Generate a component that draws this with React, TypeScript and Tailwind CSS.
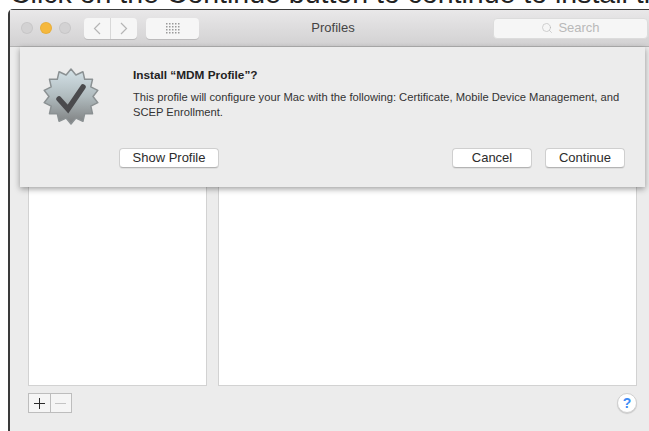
import { Search } from "lucide-react";

const sans = "font-['Liberation_Sans','Noto_Sans',sans-serif]";

// 14-pointed badge outline centred on 28,28
const sealPoints = Array.from({ length: 28 }, (_, i) => {
  const r = i % 2 === 0 ? 27.5 : 22;
  const a = (i * Math.PI) / 14 - Math.PI / 2;
  return `${(28 + r * Math.cos(a)).toFixed(2)},${(28.5 + r * Math.sin(a)).toFixed(2)}`;
}).join(" ");

function Seal() {
  return (
    <svg width="56" height="57" viewBox="0 0 56 57" className="shrink-0">
      <defs>
        <linearGradient id="sealFill" x1="0" y1="0" x2="0" y2="1">
          <stop offset="0" stopColor="#d4e2e8" />
          <stop offset="0.5" stopColor="#b0bbbe" />
          <stop offset="1" stopColor="#7e8081" />
        </linearGradient>
      </defs>
      <polygon points={sealPoints} fill="url(#sealFill)" stroke="#8b9193" strokeWidth="1.5" strokeLinejoin="round" />
      <path d="M16 31 L25 41 L40 19" fill="none" stroke="#4a4a4d" strokeWidth="5.5" strokeLinejoin="miter" strokeLinecap="round" />
    </svg>
  );
}

function SheetButton({ label, width }: { label: string; width: string }) {
  return (
    <button className={`${width} h-[20px] rounded-[4px] bg-white border border-[#cfcfcf] border-b-[#b4b4b4] shadow-[0_1px_0_rgba(0,0,0,0.06)] text-[13px] leading-[18px] text-[#2c2c2c]`}>
      {label}
    </button>
  );
}

function Traffic({ color }: { color: string }) {
  return <span className={`w-[12px] h-[12px] rounded-full ${color} border border-black/5`} />;
}

function GridDots() {
  return (
    <svg width="14" height="11" viewBox="0 0 14 11">
      {[0, 1, 2, 3].map((row) =>
        [0, 1, 2, 3, 4].map((col) => (
          <rect key={`${row}-${col}`} x={col * 3} y={row * 3} width="1.5" height="1.5" fill="#9a9a9a" />
        ))
      )}
    </svg>
  );
}

export default function App() {
  return (
    <div className={`${sans} relative w-[649px] h-[431px] overflow-hidden bg-white flex flex-col`}>
      {/* caption line, only its lower edge is in view */}
      <div className="h-[9px] shrink-0 overflow-hidden whitespace-nowrap pl-[10px]">
        <p className="text-[28.5px] leading-[32px] text-[#222] mt-[-23px]">Click on the Continue button to continue to install the profile</p>
      </div>

      <div className="flex-1 ml-[8px] flex flex-col bg-[#ececec] border-l-2 border-t border-[#3a3a3a] rounded-tl-[5px] min-h-0">
        {/* title bar */}
        <div className="h-[37px] shrink-0 flex items-center pl-[11px] pr-[1px] bg-gradient-to-b from-[#e9e8e9] to-[#d2d1d2] border-b border-[#b3b3b3]">
          <div className="flex items-center gap-[7px]">
            <Traffic color="bg-[#d3d2d3]" />
            <Traffic color="bg-[#f5b83d]" />
            <Traffic color="bg-[#d3d2d3]" />
          </div>
          <div className="ml-[13px] flex h-[21px] w-[53px] rounded-[4px] bg-[#f6f6f6] shadow-[0_1px_0_rgba(0,0,0,0.12)]">
            <span className="flex-1 flex items-center justify-center border-r border-[#d8d8d8]">
              <svg width="8" height="13" viewBox="0 0 8 13"><path d="M7 1 L1.5 6.5 L7 12" fill="none" stroke="#b5b5b5" strokeWidth="1.2" /></svg>
            </span>
            <span className="flex-1 flex items-center justify-center">
              <svg width="8" height="13" viewBox="0 0 8 13"><path d="M1 1 L6.5 6.5 L1 12" fill="none" stroke="#b5b5b5" strokeWidth="1.2" /></svg>
            </span>
          </div>
          <div className="ml-[9px] flex h-[21px] w-[53px] items-center justify-center rounded-[4px] bg-[#f6f6f6] shadow-[0_1px_0_rgba(0,0,0,0.12)]">
            <GridDots />
          </div>
          <span className="ml-[99px] w-[70px] text-center text-[13px] text-[#444]">Profiles</span>
          <div className="ml-auto flex h-[21px] w-[155px] items-center justify-center gap-[5px] rounded-[4px] bg-[#f6f6f6] border border-[#dcdcdc] text-[13px] text-[#b9b9b9]">
            <Search size={12} strokeWidth={1.3} />
            Search
          </div>
        </div>

        {/* list and detail panes */}
        <div className="flex-1 min-h-0 flex gap-[11px] pl-[18px] pr-[12px] pt-[8px]">
          <div className="w-[179px] bg-white border border-[#d2d2d2]" />
          <div className="flex-1 bg-white border border-[#d2d2d2]" />
        </div>

        {/* add / remove and help */}
        <div className="h-[45px] shrink-0 flex items-start justify-between pl-[18px] pr-[12px] pt-[7px]">
          <div className="flex h-[20px] w-[44px] border border-[#bdbdbd] bg-[#f5f5f5]">
            <span className="flex-1 flex items-center justify-center border-r border-[#bdbdbd]">
              <svg width="11" height="11" viewBox="0 0 11 11"><path d="M5.5 0 V11 M0 5.5 H11" stroke="#2a2a2a" strokeWidth="1" /></svg>
            </span>
            <span className="flex-1 flex items-center justify-center">
              <svg width="11" height="11" viewBox="0 0 11 11"><path d="M0 5.5 H11" stroke="#c4c4c4" strokeWidth="1" /></svg>
            </span>
          </div>
          <span className="flex h-[20px] w-[20px] items-center justify-center rounded-full bg-white border border-[#d0d0d0] shadow-[0_1px_1px_rgba(0,0,0,0.15)] text-[14px] font-bold text-[#3d8cf5]">?</span>
        </div>
      </div>

      {/* install sheet sits over the window */}
      <div className="absolute left-[20px] top-[47px] w-[625px] h-[140px] bg-[#ececec] shadow-[0_2px_6px_rgba(0,0,0,0.38)] pt-[21px] pl-[23px] pr-[20px] flex flex-col">
        <div className="flex">
          <Seal />
          <div className="ml-[34px] flex-1">
            <p className="text-[11.8px] leading-[14px] font-bold text-[#222]">Install “MDM Profile”?</p>
            <p className="mt-[8px] text-[11.2px] leading-[15px] text-[#333]">
              This profile will configure your Mac with the following: Certificate, Mobile Device Management, and<br />SCEP Enrollment.
            </p>
          </div>
        </div>
        <div className="mt-[23px] flex items-center pl-[76px]">
          <SheetButton label="Show Profile" width="w-[100px]" />
          <div className="ml-auto flex gap-[13px]">
            <SheetButton label="Cancel" width="w-[80px]" />
            <SheetButton label="Continue" width="w-[80px]" />
          </div>
        </div>
      </div>
    </div>
  );
}
